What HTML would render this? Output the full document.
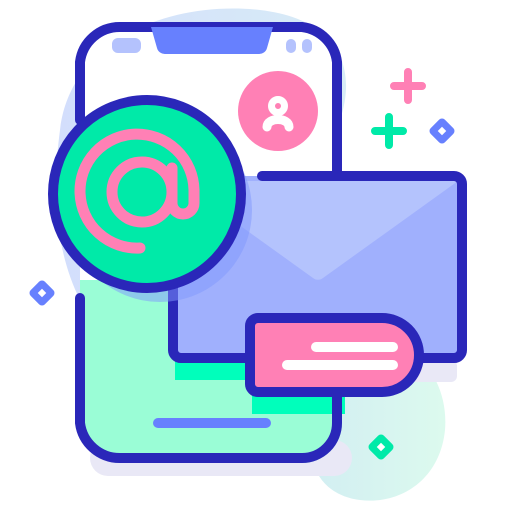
<!DOCTYPE html>
<html><head><style>html,body{margin:0;padding:0;background:#fff;}svg{display:block}</style></head>
<body>
<svg width="512" height="512" viewBox="0 0 512 512" xmlns="http://www.w3.org/2000/svg">
<defs>
<linearGradient id="bg1" x1="0" x2="1"><stop offset="0" stop-color="#d3defc"/><stop offset="1" stop-color="#d8ecf6"/></linearGradient>
<linearGradient id="bg2" x1="0" x2="1"><stop offset="0" stop-color="#d2eef2"/><stop offset="1" stop-color="#dcfaee"/></linearGradient>
</defs>
<path d="M60 130 C70 40 170 0 260 10 C330 18 360 60 340 120 L340 260 L80 300 C55 250 52 190 60 130Z" fill="url(#bg1)"/>
<path d="M330 330 C400 320 450 370 445 430 C440 480 400 505 360 500 C320 495 300 460 320 420Z" fill="url(#bg2)"/>
<rect x="90" y="440" width="262" height="36" rx="18" fill="#e9e8f6"/>
<rect x="345" y="360" width="112" height="22" rx="6" fill="#e9e8f6"/>
<path d="M120 22 H302 A40 40 0 0 1 342 62 V423 A40 40 0 0 1 302 463 H120 A40 40 0 0 1 80 423 V62 A40 40 0 0 1 120 22Z" fill="#fff"/>
<path d="M80 280 H342 V423 A40 40 0 0 1 302 463 H120 A40 40 0 0 1 80 423Z" fill="#9afdd6"/>
<rect x="175" y="358" width="80" height="22" fill="#00ffbb"/>
<rect x="252" y="390" width="93" height="24" fill="#00ffbb"/>
<path d="M80 120 V62 A40 40 0 0 1 120 27 H302 A40 40 0 0 1 337 62 V176" fill="none" stroke="#2a27b9" stroke-width="10" stroke-linecap="round"/>
<path d="M80 298 V423 A40 40 0 0 0 120 458 H302 A35 35 0 0 0 337 423 V392" fill="none" stroke="#2a27b9" stroke-width="10" stroke-linecap="round"/>
<path d="M151 27 H273 L267 48 A8 8 0 0 1 259 54 H165 A8 8 0 0 1 157 48Z" fill="#6780fe"/>
<rect x="112" y="38" width="29" height="15" rx="6" fill="#b4c2fd"/>
<rect x="286" y="39" width="10" height="14" rx="5" fill="#b4c2fd"/>
<rect x="302" y="39" width="10" height="14" rx="5" fill="#b4c2fd"/>
<line x1="158" y1="423" x2="266" y2="423" stroke="#6780fe" stroke-width="10" stroke-linecap="round"/>
<circle cx="278" cy="111" r="40" fill="#ff80b5"/>
<circle cx="278" cy="106" r="6.5" fill="none" stroke="#fff" stroke-width="7"/>
<path d="M267 127 C267 117 289 117 289 127" fill="none" stroke="#fff" stroke-width="9" stroke-linecap="round"/>
<rect x="173" y="176" width="289" height="182" rx="8" fill="#a0b0fd"/>
<path d="M178 181 H458 L323 278 A8 8 0 0 1 313 278Z" fill="#b4c3fd"/>
<path d="M262 176 H454 A8 8 0 0 1 462 184 V350 A8 8 0 0 1 454 358 H418" fill="none" stroke="#2a27b9" stroke-width="10" stroke-linecap="round"/>
<path d="M173 270 V350 A8 8 0 0 0 181 358 H250" fill="none" stroke="#2a27b9" stroke-width="10" stroke-linecap="round"/>
<circle cx="160" cy="210" r="92" fill="#7f97fe" opacity="0.5"/>
<circle cx="147" cy="194" r="94" fill="#00eaa8" stroke="#2a27b9" stroke-width="10"/>
<g fill="none" stroke="#ff80b5" stroke-width="11" stroke-linecap="round" stroke-linejoin="round">
<circle cx="142" cy="192" r="30"/>
<path d="M172 168 V203 A11 11 0 0 0 194 203 V190 A57 57 0 1 0 140 248"/>
</g>
<path d="M258 318 H382 A37 37 0 0 1 382 392 H258 A8 8 0 0 1 250 384 V326 A8 8 0 0 1 258 318Z" fill="#ff80b5" stroke="#2a27b9" stroke-width="10"/>
<line x1="316" y1="347" x2="393" y2="347" stroke="#fff" stroke-width="10" stroke-linecap="round"/>
<line x1="287" y1="365" x2="393" y2="365" stroke="#fff" stroke-width="10" stroke-linecap="round"/>
<path d="M408 72 V100 M394 86 H422" stroke="#ff80b5" stroke-width="8" stroke-linecap="round"/>
<path d="M389 117 V145 M375 131 H403" stroke="#00eaa8" stroke-width="8" stroke-linecap="round"/>
<rect x="432" y="121" width="20" height="20" rx="4" transform="rotate(45 442 131)" fill="#6780fe"/>
<rect x="439" y="128" width="6" height="6" transform="rotate(45 442 131)" fill="#fff"/>
<rect x="32" y="283" width="20" height="20" rx="4" transform="rotate(45 42 293)" fill="#6780fe"/>
<rect x="39" y="290" width="6" height="6" transform="rotate(45 42 293)" fill="#fff"/>
<rect x="371" y="437" width="20" height="20" rx="4" transform="rotate(45 381 447)" fill="#00eaa8"/>
<rect x="378" y="444" width="6" height="6" transform="rotate(45 381 447)" fill="#fff"/>
</svg>
</body></html>
